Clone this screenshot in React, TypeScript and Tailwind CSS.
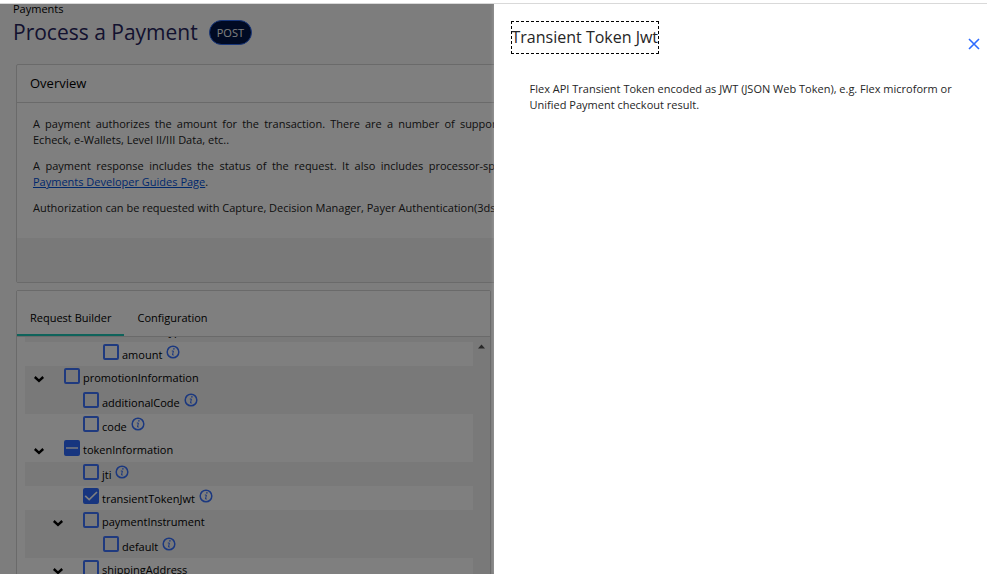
import { useEffect, useRef } from "react"
import clsx from "clsx"

type Node = {
  id: string
  level: "pl-[39px]" | "pl-[58px]" | "pl-[78px]"
  parent?: boolean
  checked?: boolean
  partial?: boolean
  shaded?: boolean
}

const nodes: Node[] = [
  { id: "amount", level: "pl-[78px]" },
  { id: "promotionInformation", level: "pl-[39px]", parent: true, shaded: true },
  { id: "additionalCode", level: "pl-[58px]", shaded: true },
  { id: "code", level: "pl-[58px]" },
  { id: "tokenInformation", level: "pl-[39px]", parent: true, partial: true },
  { id: "jti", level: "pl-[58px]", shaded: true },
  { id: "transientTokenJwt", level: "pl-[58px]", checked: true },
  { id: "paymentInstrument", level: "pl-[58px]", parent: true, shaded: true },
  { id: "default", level: "pl-[78px]", shaded: true },
  { id: "shippingAddress", level: "pl-[58px]", parent: true },
]

function Tick({ id, checked, partial }: { id: string; checked?: boolean; partial?: boolean }) {
  const ref = useRef<HTMLInputElement>(null)

  useEffect(() => {
    if (ref.current) ref.current.indeterminate = !!partial
  }, [partial])

  return (
    <span className="grid size-4 shrink-0">
      <input
        ref={ref}
        id={id}
        type="checkbox"
        defaultChecked={checked}
        className="peer col-start-1 row-start-1 size-4 appearance-none rounded-xs border-2 border-[#3f74ff] checked:border-[#2e6bff] checked:bg-[#2e6bff] indeterminate:border-[#2e6bff] indeterminate:bg-[#2e6bff]"
      />
      <svg
        viewBox="0 0 16 16"
        className="pointer-events-none col-start-1 row-start-1 hidden size-4 peer-checked:block"
        fill="none"
        stroke="#fff"
        strokeWidth="1.6"
      >
        <path d="M2.2 7.8 L6.2 11.6 L14 4" />
      </svg>
      <svg
        viewBox="0 0 16 16"
        className="pointer-events-none col-start-1 row-start-1 hidden size-4 peer-indeterminate:block"
        stroke="#fff"
        strokeWidth="1.4"
      >
        <path d="M2 8 H14" />
      </svg>
    </span>
  )
}

function InfoIcon() {
  return (
    <svg viewBox="0 0 14 14" className="size-3.5" fill="none" stroke="#3670ff" strokeLinecap="round">
      <circle cx="7" cy="7" r="5.8" strokeWidth="1.5" />
      <path d="M6.2 6 H7.4 L6.5 10 H7.4" strokeWidth="1" />
      <circle cx="7.8" cy="3.9" r="0.4" fill="#3670ff" strokeWidth="0.6" />
    </svg>
  )
}

function Row({ node }: { node: Node }) {
  return (
    <div className={clsx("flex h-6 w-full shrink-0 items-start", node.shaded ? "bg-[#f2f2f2]" : "bg-white")}>
      <div className={clsx("relative flex items-start pt-0.5", node.level)}>
        {node.parent && (
          <button
            aria-label={"Toggle " + node.id}
            className={clsx("absolute top-2 h-2.5 w-3", node.level === "pl-[39px]" ? "left-2" : "left-[27px]")}
          >
            <svg viewBox="0 0 12 10" className="h-2.5 w-3" fill="none" stroke="#000" strokeWidth="2.4">
              <path d="M1.8 3 L6 6.8 L10.2 3" />
            </svg>
          </button>
        )}
        <Tick id={node.id} checked={node.checked} partial={node.partial} />
        <label
          htmlFor={node.id}
          className={clsx("pl-[3px] text-[11px] leading-5", !node.parent && "pt-px")}
        >
          {node.id}
        </label>
        {!node.parent && (
          <button aria-label={"About " + node.id} className="ml-1 mt-px">
            <InfoIcon />
          </button>
        )}
      </div>
    </div>
  )
}

function Overview() {
  return (
    <section className="rounded-xs border border-[#d4d4d4] bg-white">
      <h2 className="border-b border-[#d4d4d4] px-[13px] pt-2 pb-[9px] text-[13px] leading-5 text-black">Overview</h2>
      <div className="space-y-2.5 px-4 pt-[13px] pb-[22px] text-justify text-[11px] leading-4 text-[#222]">
        <p>
          A payment authorizes the amount for the transaction. There are a number of supported payment features, such as
          E-commerce and Card Present - Credit or Debit Card,{" "}
          <span className="whitespace-nowrap">Echeck, e-Wallets,</span> Level II/III Data, etc..
        </p>
        <p>
          A payment response includes the status of the request. It also includes processor-specific information when the
          request is successful and errors if unsuccessful. See the{" "}
          <a href="#guides" className="whitespace-nowrap text-[#0050d8] underline">
            Payments Developer Guides Page
          </a>
          .
        </p>
        <p>
          Authorization can be requested with Capture, Decision Manager, Payer Authentication(3ds), and Token Creation.
        </p>
      </div>
      <div className="h-11 bg-[#f2f2f2]" />
    </section>
  )
}

function RequestBuilder() {
  return (
    <section className="rounded-t-xs border border-[#d4d4d4] bg-[#f2f2f2]">
      <div role="tablist" className="flex h-[46px] items-end border-b border-[#d4d4d4] bg-white text-[11px] leading-5">
        <button role="tab" aria-selected className="border-b-2 border-[#1fc7b6] px-[13px] pb-1.5">
          Request Builder
        </button>
        <button role="tab" aria-selected={false} className="border-b-2 border-transparent px-[13px] pb-1.5">
          Configuration
        </button>
      </div>
      <div className="flex">
        <div className="grow bg-white pl-2">
          {/* list is scrolled, only the foot of this row shows */}
          <div className="flex h-[5px] items-end overflow-hidden">
            <Row node={{ id: "amountType", level: "pl-[78px]", shaded: true }} />
          </div>
          {nodes.map((node) => (
            <Row key={node.id} node={node} />
          ))}
        </div>
        <div className="w-[17px] pt-[7px]">
          <svg viewBox="0 0 17 5" className="h-[5px] w-[17px]" fill="#505050">
            <path d="M5 4.5 L8.5 0.5 L12 4.5 Z" />
          </svg>
        </div>
      </div>
    </section>
  )
}

function Drawer() {
  return (
    <aside
      role="dialog"
      aria-label="Transient Token Jwt"
      className="absolute inset-y-0 right-0 w-1/2 bg-white pt-[17px] text-[#262626] shadow-[0_0_4px_rgba(255,255,255,0.3)]"
    >
      <div className="flex items-start justify-between pr-1.5 pl-[17px]">
        <h2 className="border border-dashed border-black text-[16px] leading-[31px]">Transient Token Jwt</h2>
        <button aria-label="Close" className="mt-4">
          <svg viewBox="0 0 14 14" className="size-3.5" fill="none" stroke="#2e6bff" strokeWidth="1.6">
            <path d="M2 2 L12 12 M12 2 L2 12" />
          </svg>
        </button>
      </div>
      <p className="pt-[27px] pr-6 pl-9 text-[11px] leading-4">
        Flex API Transient Token encoded as JWT (JSON Web Token), e.g. Flex microform or Unified Payment checkout
        result.
      </p>
    </aside>
  )
}

export default function App() {
  return (
    <div className="flex h-screen flex-col overflow-hidden bg-white font-['Open_Sans','Noto_Sans',sans-serif]">
      <div className="h-1 shrink-0 border-b border-[#d9d9d9]" />
      <div className="relative grow overflow-hidden bg-[#fafafa]">
        <main className="h-0 px-4">
          <header className="-ml-[3px]">
            <p className="h-3 text-[11px] leading-[10px]">Payments</p>
            <div className="flex items-center gap-[11px]">
              <h1 className="text-[21px] leading-8 text-[#27255f]">Process a Payment</h1>
              <span className="rounded-full border border-[#2f6df6] bg-[#001446] px-[7px] text-[11px] leading-[23px] text-white">
                POST
              </span>
            </div>
          </header>
          <div className="pt-4">
            <Overview />
          </div>
          <div className="grid grid-cols-2 gap-1.5 pt-[7px]">
            <RequestBuilder />
          </div>
        </main>
        <div className="absolute inset-0 bg-black/50" />
        <Drawer />
      </div>
    </div>
  )
}
